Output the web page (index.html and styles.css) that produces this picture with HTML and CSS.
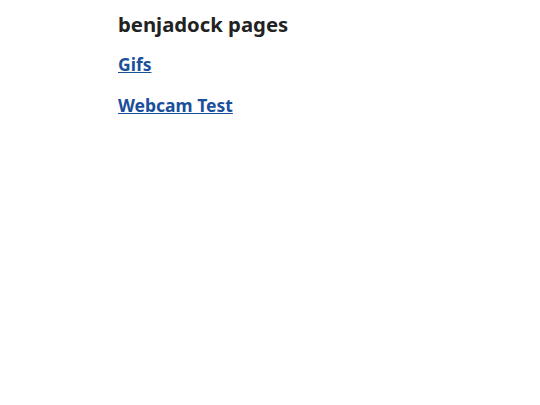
FILE: index.html
```
<!DOCTYPE html>
<html>
<head>
<meta charset="utf-8">
<link rel="stylesheet" href="styles.css">
</head>
<body>
<main class="page">
  <h1 class="title">benjadock pages</h1>
  <ul class="links">
    <li><a href="#">Gifs</a></li>
    <li><a href="#">Webcam Test</a></li>
  </ul>
</main>
</body>
</html>
```

FILE: styles.css
```
html, body { margin: 0; padding: 0; background: #fff; }
body { font-family: "Noto Sans", "Open Sans", sans-serif; color: #222; }
.page { padding: 10px 0 0 118px; }
.title { font-size: 20.3px; font-weight: 700; margin: 0; line-height: 28px; color: #222; }
.links { list-style: none; margin: 14px 0 0; padding: 0; display: flex; flex-direction: column; gap: 16px; }
.links li { line-height: 24px; }
.links a { font-size: 17.5px; font-weight: 700; color: #1a4f9c; line-height: 24px; text-decoration: underline; }
```
